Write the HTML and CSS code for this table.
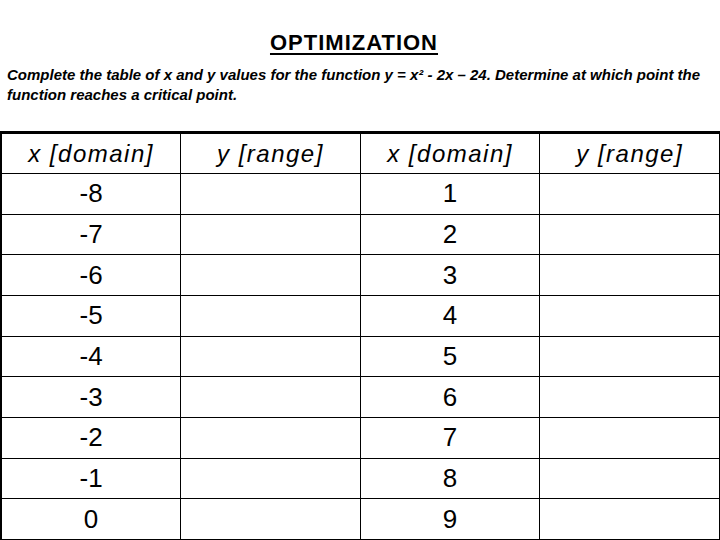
FILE: index.html
```html
<!DOCTYPE html>
<html>
<head>
<meta charset="utf-8">
<link rel="stylesheet" href="styles.css">
</head>
<body>
<div class="page">
  <h1 class="title">OPTIMIZATION</h1>
  <p class="intro">Complete the table of x and y values for the function y = x² - 2x – 24. Determine at which point the function reaches a critical point.</p>
  <table class="values">
    <thead>
      <tr><th>x [domain]</th><th>y [range]</th><th>x [domain]</th><th>y [range]</th></tr>
    </thead>
    <tbody>
      <tr><td>-8</td><td></td><td>1</td><td></td></tr>
      <tr><td>-7</td><td></td><td>2</td><td></td></tr>
      <tr><td>-6</td><td></td><td>3</td><td></td></tr>
      <tr><td>-5</td><td></td><td>4</td><td></td></tr>
      <tr><td>-4</td><td></td><td>5</td><td></td></tr>
      <tr><td>-3</td><td></td><td>6</td><td></td></tr>
      <tr><td>-2</td><td></td><td>7</td><td></td></tr>
      <tr><td>-1</td><td></td><td>8</td><td></td></tr>
      <tr><td>0</td><td></td><td>9</td><td></td></tr>
    </tbody>
  </table>
</div>
</body>
</html>
```
FILE: styles.css
```css
html, body {
  margin: 0;
  padding: 0;
  background: #fff;
  color: #000;
  font-family: "Liberation Sans", Arial, sans-serif;
}
.page {
  width: 720px;
  height: 540px;
  overflow: hidden;
  padding-top: 29px;
  box-sizing: border-box;
}
.title {
  margin: 0;
  padding-right: 12px;
  text-align: center;
  font-size: 22px;
  line-height: 28px;
  font-weight: bold;
  letter-spacing: 1px;
  text-decoration: underline;
  text-decoration-thickness: 2px;
  text-underline-offset: 3px;
}
.intro {
  margin: 8px 0 0 0;
  padding: 0 12px 0 7px;
  font-size: 15px;
  line-height: 20px;
  font-weight: bold;
  font-style: italic;
  letter-spacing: 0;
}
.values {
  margin-top: 26px;
  width: 720px;
  table-layout: fixed;
  border-collapse: collapse;
}
.values th,
.values td {
  border: 1px solid #000;
  padding: 0;
  text-align: center;
  vertical-align: middle;
  font-size: 26px;
  font-weight: normal;
}
.values th {
  height: 39px;
  border-top: 3px solid #000;
  font-style: italic;
  font-size: 24px;
  letter-spacing: 1.5px;
}
.values td {
  height: 39.67px;
}
.values tr > :first-child {
  border-left: 2px solid #000;
}
```
